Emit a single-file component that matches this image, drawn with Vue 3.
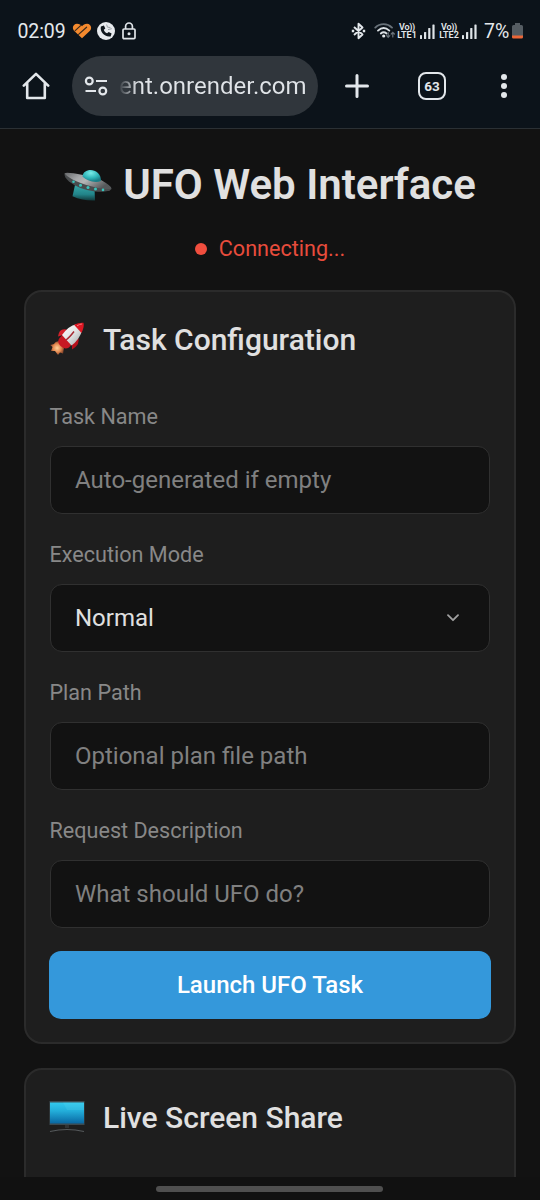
<script setup>
import { ref } from 'vue'

const fields = [
  { id: 'task', label: 'Task Name', hint: 'Auto-generated if empty' },
  { id: 'mode', label: 'Execution Mode', value: 'Normal' },
  { id: 'plan', label: 'Plan Path', hint: 'Optional plan file path' },
  { id: 'request', label: 'Request Description', hint: 'What should UFO do?' }
]
const sims = ['LTE1', 'LTE2']
const tabs = ref(63)
</script>

<template>
  <div class="screen">
    <header class="chrome">
      <div class="status-bar">
        <span class="clock">02:09</span>
        <svg class="heart" width="20" height="18" viewBox="0 0 20 18" fill="none">
          <path d="M10 16.200L2.300 9C-.8 5.800 1.600 1.700 5 1.700C7.300 1.700 8.800 2.600 10 4.200C11.200 2.600 12.700 1.700 15 1.700C18.600 1.700 20.700 5.800 17.700 9Z" fill="#f58a2e" />
          <path d="M3.200 8.600L8.600 3.600M6.600 12.400L14.600 5.200" stroke="#3b291b" stroke-width="1.200" stroke-linecap="round" />
        </svg>
        <svg class="call" width="18" height="18" viewBox="0 0 18 18">
          <circle cx="9" cy="9" r="9" fill="#e7eaed" />
          <path d="M3.900 4.600C2.600 9.800 7.500 15.400 13.600 14.400L14.600 11.400L11.700 9.900L10.100 11.300C8.500 10.700 7.400 9.500 6.800 7.800L8.300 6.500L6.900 3.400Z" fill="#10171d" />
          <path d="M9.600 2.500L10.500 5.200L13.400 5.500M11 7.600L14.800 6.700" stroke="#9aa0a6" stroke-width="1" fill="none" />
        </svg>
        <svg class="lock" width="14" height="18" viewBox="0 0 14 18" fill="none" stroke="#e1e5e9" stroke-width="1.7">
          <rect x="1" y="7" width="12" height="9.600" rx="1" />
          <path d="M3.600 7V4.400a3.400 3.400 0 0 1 6.800 0V7" />
          <circle cx="7" cy="11.800" r="1.500" fill="#e1e5e9" stroke="none" />
        </svg>
        <span class="grow"></span>
        <svg class="bt" width="15" height="18" viewBox="0 0 15 18" fill="none" stroke="#e4e8ec" stroke-width="1.9" stroke-linejoin="round">
          <path d="M3 5L11.500 12.500L7.500 16.200V1.800L11.500 5.500L3 13" />
          <path d="M.8 9H3.200M11.800 9H14.200" stroke-width="2.400" />
        </svg>
        <svg class="wifi" width="22" height="18" viewBox="0 0 22 18" fill="none" stroke-linecap="round">
          <path d="M1.300 5.600C6 1 13.200 1 18 5.600" stroke="#69727a" stroke-width="1.900" />
          <path d="M4 8.600C7.600 5.300 11.700 5.300 15.300 8.600" stroke="#dce1e5" stroke-width="1.900" />
          <path d="M6.800 11.500C8.800 9.800 10.600 9.800 12.600 11.500" stroke="#dce1e5" stroke-width="1.900" />
          <circle cx="9.700" cy="14" r="1.600" fill="#e4e8ec" />
          <path d="M14.200 10.500V15.200M12.600 13.700L14.200 15.400L15.800 13.700M18.800 15V10.500M17.200 12L18.800 10.300L20.400 12" stroke="#69727a" stroke-width="1.200" />
        </svg>
        <template v-for="sim in sims" :key="sim">
          <span class="volte"><span class="vo">Vo))</span><span>{{ sim }}</span></span>
          <svg class="bars" width="15" height="15" viewBox="0 0 15 15" fill="#dfe4e8">
            <rect x="0" y="11" width="2" height="4" rx=".6" />
            <rect x="4" y="8" width="2.200" height="7" rx=".6" />
            <rect x="8.200" y="4" width="2.200" height="11" rx=".6" />
            <rect x="12.400" y="0.400" width="2.200" height="14.600" rx=".6" />
          </svg>
        </template>
        <span class="percent">7%</span>
        <svg class="battery" width="11" height="16" viewBox="0 0 11 16">
          <path d="M3 0h5v2h1.500A1.500 1.500 0 0 1 11 3.500V13H0V3.500A1.500 1.500 0 0 1 1.500 2H3Z" fill="#555c62" />
          <path d="M0 12.600h11v1.600a1.400 1.400 0 0 1-1.400 1.400H1.400A1.400 1.400 0 0 1 0 14.200Z" fill="#ec6637" />
        </svg>
      </div>

      <div class="toolbar">
        <svg class="home" width="28" height="28" viewBox="0 0 28 28" fill="none" stroke="#e3e7eb" stroke-width="2.600" stroke-linejoin="round" stroke-linecap="round">
          <path d="M1.800 13.600L14 1.900L26.200 13.600M5.200 11.500V26h17.600V11.500" />
        </svg>
        <div class="address">
          <svg class="tune" width="24" height="20" viewBox="0 0 24 20" fill="none" stroke="#e3e7eb" stroke-width="2.200">
            <circle cx="5.300" cy="5" r="3.400" />
            <path d="M12 5H23M1.500 15H12" />
            <circle cx="18.800" cy="15" r="3.400" />
          </svg>
          <span class="url">ent.onrender.com</span>
        </div>
        <svg class="plus" width="24" height="24" viewBox="0 0 24 24" stroke="#e3e7eb" stroke-width="3" stroke-linecap="round">
          <path d="M1.500 12H22.500M12 1.500V22.500" />
        </svg>
        <span class="tabs">{{ tabs }}</span>
        <svg class="more" width="6" height="26" viewBox="0 0 6 26" fill="#e3e7eb">
          <circle cx="3" cy="4" r="3" /><circle cx="3" cy="13" r="3" /><circle cx="3" cy="22" r="3" />
        </svg>
      </div>
    </header>

    <main class="page">
      <h1>
        <svg class="ufo" width="48" height="34" viewBox="0 0 48 34">
          <defs>
            <linearGradient id="beam" x1="0" y1="0" x2="0" y2="1">
              <stop offset="0" stop-color="#37a8a8" /><stop offset=".6" stop-color="#22858a" /><stop offset="1" stop-color="#123a3c" />
            </linearGradient>
            <linearGradient id="hull" x1="0" y1="0" x2="1" y2=".5">
              <stop offset="0" stop-color="#66686a" /><stop offset=".35" stop-color="#a5a7a9" /><stop offset=".55" stop-color="#b5b6b7" /><stop offset="1" stop-color="#55585a" />
            </linearGradient>
            <radialGradient id="dome" cx=".45" cy=".25" r=".7">
              <stop offset="0" stop-color="#79ece8" /><stop offset=".6" stop-color="#2fb6b9" /><stop offset="1" stop-color="#1b7e87" />
            </radialGradient>
          </defs>
          <path d="M11 17L8.500 28.200Q19 33 31 32.500L30.500 20Z" fill="url(#beam)" />
          <path d="M.5 5.500Q0 9 5 13.500Q15 21.500 31 23.500Q45 24.500 47.500 21Q47.500 19 37 13Z" fill="#494c4e" />
          <path d="M.5 5.500Q1.500 3.500 19 7L37 12Q47.500 18 47.500 20.500Q43 22.200 33 19.800Q8 14 .5 5.500Z" fill="url(#hull)" />
          <path d="M18.500 8.500C19 -.8 37 -.8 37 13C31 15.500 22 12.500 18.500 8.500Z" fill="url(#dome)" />
          <g fill="#38c5bd">
            <circle cx="9.500" cy="13.700" r="1.300" /><circle cx="16.500" cy="17.300" r="1.500" /><circle cx="24" cy="19.500" r="1.500" /><circle cx="31.500" cy="21" r="1.500" /><circle cx="39" cy="21.900" r="1.300" />
          </g>
        </svg>
        <span class="h1-text">UFO Web Interface</span>
      </h1>
      <p class="status"><i class="dot"></i><span>Connecting...</span></p>

      <section class="card config">
        <h2>
          <svg width="36" height="34" viewBox="0 0 36 34">
            <defs>
              <linearGradient id="body" x1="0" y1="0" x2="1" y2="1">
                <stop offset="0" stop-color="#fff" /><stop offset=".5" stop-color="#e1e3e3" /><stop offset="1" stop-color="#9fa4a5" />
              </linearGradient>
              <radialGradient id="flame">
                <stop offset="0" stop-color="#ffd39b" /><stop offset=".6" stop-color="#e38950" /><stop offset="1" stop-color="#8c482c" />
              </radialGradient>
            </defs>
            <path d="M10 19Q6 19.500 5 22L1.200 23L3.500 25L2 29L6 29L9 33L11 30.500L14 31.500L15 26Z" fill="url(#flame)" />
            <path d="M18 7.500Q10 5.500 9 14.500L14 13Z" fill="#d3202a" />
            <path d="M29 15Q32 22 23 27.500L23 21Z" fill="#b6101b" />
            <path d="M10.500 16Q7.500 20 11.500 24Q15.500 28 20 25.500L23 22L14 12.500Z" fill="#c71923" />
            <path d="M13 13Q20 3.500 27 2.500L33 9Q30 18 22.500 23.500Z" fill="url(#body)" />
            <path d="M25 2.800Q30 .4 34.500 .8Q35.500 5 32.500 11Z" fill="#dc1723" />
            <path d="M17 18Q20 16 25 9.500" stroke="#a62c34" stroke-width="1.500" fill="none" />
            <path d="M28 3.800Q31 2 33 2" stroke="#f57478" stroke-width="1" fill="none" />
          </svg>
          <span class="config-title">Task Configuration</span>
        </h2>
        <div v-for="field in fields" :key="field.id" class="field">
          <label>{{ field.label }}</label>
          <div class="input" :class="{ filled: field.value }">
            <span>{{ field.value || field.hint }}</span>
            <svg v-if="field.value" width="12" height="8" viewBox="0 0 12 8" fill="none" stroke="#a0a0a0" stroke-width="1.800" stroke-linecap="round" stroke-linejoin="round">
              <path d="M1 1.200L6 6.200L11 1.200" />
            </svg>
          </div>
        </div>
        <button><span>Launch UFO Task</span></button>
      </section>

      <section class="card share">
        <h2>
          <svg width="36" height="32" viewBox="0 0 36 32">
            <defs>
              <linearGradient id="glass" x1="0" y1="0" x2="0" y2="1">
                <stop offset="0" stop-color="#32c9ed" /><stop offset=".4" stop-color="#23aeda" /><stop offset="1" stop-color="#0967a2" />
              </linearGradient>
            </defs>
            <rect x=".5" y="0" width="35" height="24" fill="#3c4a50" />
            <rect x="1" y="1.500" width="34" height="21" fill="url(#glass)" />
            <path d="M14 1.500H35V9L18 9Z" fill="#69dcf3" opacity=".18" />
            <path d="M16 24h4v3h-4Z" fill="#303335" />
            <path d="M1 30.500Q18 26.500 35 30.500" stroke="#55595b" stroke-width="1.200" fill="none" />
          </svg>
          <span class="share-title">Live Screen Share</span>
        </h2>
      </section>
    </main>

    <footer class="nav"><span class="handle"></span></footer>
  </div>
</template>

<style>
html, body { background: #121212; }
</style>

<style scoped>
* { box-sizing: border-box; }
.screen {
  width: 540px;
  height: 1200px;
  overflow: hidden;
  display: flex;
  flex-direction: column;
  background: #121212;
  color: #e0e0e0;
  font-family: Roboto, "Liberation Sans", sans-serif;
}
svg { display: block; flex: none; }
span { white-space: nowrap; }
.chrome { flex: none; height: 129px; background: #0c131a; border-bottom: 1px solid #2b3034; }
.status-bar { display: flex; align-items: center; height: 62px; padding: 0 17px 0 17.500px; color: #e4e8ec; }
.clock { font-size: 19.500px; width: 54.500px; letter-spacing: -.1px; }
.call { margin-left: 5px; }
.lock { margin-left: 7px; }
.grow { flex: 1; }
.wifi { margin-left: 8px; }
.volte { display: flex; flex-direction: column; align-items: center; width: 22px; font-size: 9px; line-height: 8.500px; font-weight: 600; }
.vo { letter-spacing: -.3px; }
.bars { margin: 0 3px 0 2px; }
.percent { font-size: 19.500px; width: 28px; margin-left: 4px; }
.toolbar { display: flex; align-items: center; height: 60px; margin-top: -6px; padding-left: 22px; }
.address { display: flex; align-items: center; width: 246px; height: 60px; margin-left: 22px; padding-left: 12px; border-radius: 30px; background: #30363c; }
.url {
  margin-left: 11px;
  font-size: 24px;
  color: #e0e4e8;
  background: linear-gradient(90deg, #343a40, #e0e4e8 18px);
  background-clip: text;
  -webkit-text-fill-color: transparent;
}
.plus { margin-left: 27px; }
.tabs { display: flex; align-items: center; justify-content: center; width: 28px; height: 28px; margin-left: 49px; border: 2.500px solid #e3e7eb; border-radius: 8px; font-size: 13.500px; font-weight: 700; color: #e3e7eb; }
.more { margin-left: 55px; }
.page { flex: 1; min-height: 0; overflow: hidden; padding: 0 24px; }
h1 { display: flex; align-items: center; justify-content: center; gap: 11px; height: 50px; margin: 31px 0 0; font-size: 42px; font-weight: 600; line-height: 50px; }
.status { display: flex; align-items: center; justify-content: center; gap: 12px; height: 26px; margin: 26px 0 0; color: #e74c3c; font-size: 21.600px; line-height: 26px; }
.dot { width: 12px; height: 12px; border-radius: 50%; background: #f04e3e; }
.card { border: 2px solid #2b2b2b; border-radius: 18px; background: #1e1e1e; padding: 0 24px; }
.config { margin-top: 28px; height: 754px; }
h2 { display: flex; align-items: center; gap: 18px; height: 36px; margin: 29px 0 0 -1px; font-size: 30px; font-weight: 500; }
.config h2 { margin-bottom: 47px; }
.field { height: 138px; }
label { display: block; height: 26px; line-height: 26px; margin-left: -.5px; font-size: 21.600px; color: #888; }
.input { display: flex; align-items: center; justify-content: space-between; height: 68px; margin-top: 16px; padding: 0 30px 0 24px; border: 1px solid #303030; border-radius: 12px; background: #121212; color: #808080; font-size: 24px; }
.filled { color: #e0e0e0; }
button { display: flex; align-items: center; justify-content: center; width: 442px; height: 68px; margin: -5px -1px 0; padding: 0; border: 0; border-radius: 12px; background: #3498db; color: #fff; font: 500 24px Roboto, sans-serif; }
.share { margin-top: 24px; height: 200px; }
.nav { flex: none; height: 23px; display: flex; justify-content: center; align-items: center; padding-right: 1px; background: #111; }
.handle { width: 227px; height: 6px; border-radius: 3px; background: #4f4f4f; }
</style>
